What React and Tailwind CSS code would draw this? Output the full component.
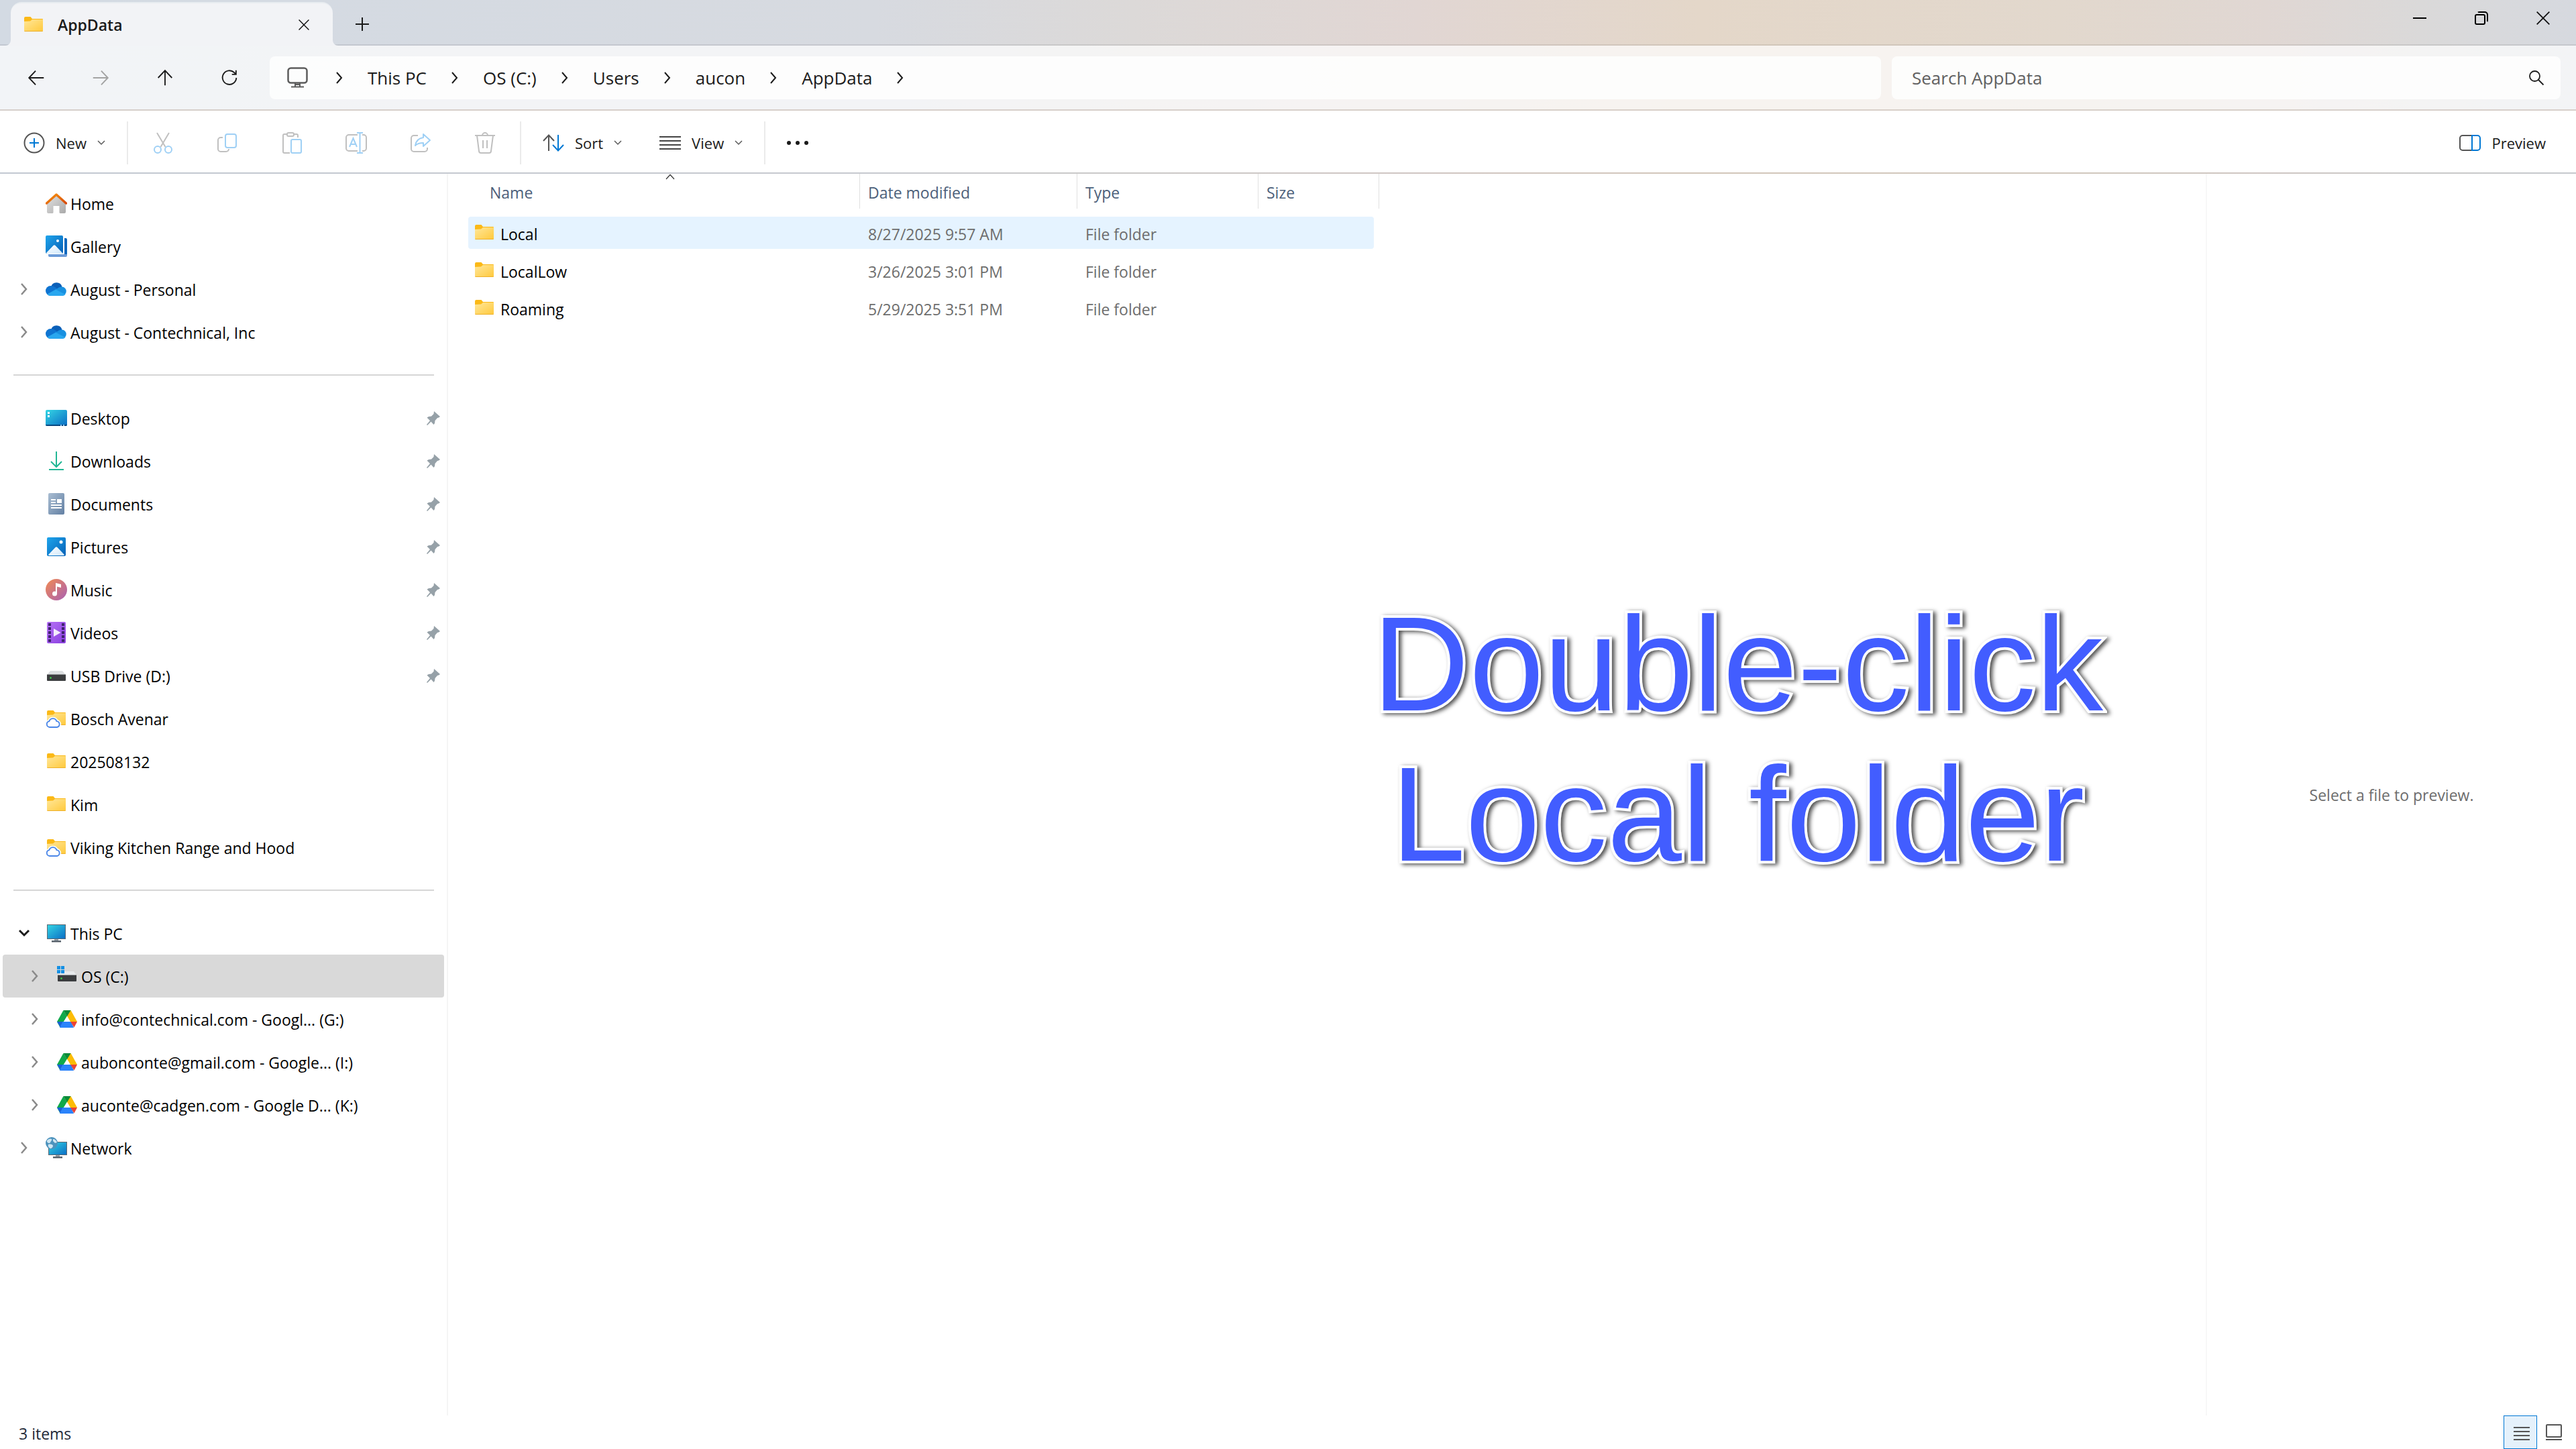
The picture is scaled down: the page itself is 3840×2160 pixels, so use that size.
import { useState } from "react";

const GRADIENTS = [
  { id: "folder", from: "#ffe79a", to: "#ffc93c" },
  { id: "blue", from: "#1fa5ec", to: "#0560b6" },
  { id: "screen", from: "#35d6e4", to: "#0a6cc4" },
  { id: "roof", from: "#f7930f", to: "#d84a0c" },
  { id: "wall", from: "#e2e2e2", to: "#a9a9a9" },
  { id: "doc", from: "#a9bdd2", to: "#6380a3" },
  { id: "music", from: "#f28a52", to: "#a860b4" },
  { id: "video", from: "#b571f5", to: "#8a3fe0" },
  { id: "snow", from: "#ffffff", to: "#cfe8fb" },
];

function Gradients() {
  return (
    <svg className="absolute w-0 h-0" aria-hidden="true">
      <defs>
        {GRADIENTS.map((g) => (
          <linearGradient key={g.id} id={g.id} x1="0" y1="0" x2="1" y2="1">
            <stop offset="0" stopColor={g.from} />
            <stop offset="1" stopColor={g.to} />
          </linearGradient>
        ))}
      </defs>
    </svg>
  );
}

function Svg({ w = 32, h = 32, children }) {
  return (
    <svg width={w} height={h} viewBox={`0 0 ${w} ${h}`} fill="none" className="shrink-0" aria-hidden="true">
      {children}
    </svg>
  );
}

/* ---------- coloured icons ---------- */

function FolderShape() {
  return (
    <>
      <path d="M2 6a2 2 0 0 1 2-2h7.5l2.5 3h15a1 1 0 0 1 1 1v8H2z" fill="#fbb917" />
      <path d="M2 11l9-.5 3-2.5h16v17a1 1 0 0 1-1 1H3a1 1 0 0 1-1-1z" fill="url(#folder)" />
      <path d="M2.5 25.5h27" stroke="#eeb02a" />
    </>
  );
}
const Folder = () => <Svg><FolderShape /></Svg>;

const CloudFolder = () => (
  <Svg>
    <FolderShape />
    <path d="M6 29a4.500 4.500 0 0 1-.6-8.900 5.800 5.800 0 0 1 11 0A4.500 4.500 0 0 1 17 29z" fill="#fff" stroke="#fff" strokeWidth="5" />
    <path d="M6 29a4.500 4.500 0 0 1-.6-8.900 5.800 5.800 0 0 1 11 0A4.500 4.500 0 0 1 17 29z" fill="#fff" stroke="#4a86e8" strokeWidth="1.800" />
  </Svg>
);

const HomeIcon = () => (
  <Svg>
    <path d="M2 14L16 3l14 11v15a2 2 0 0 1-2 2h-6a1.500 1.500 0 0 1-1.500-1.500V20h-9v9.500A1.500 1.500 0 0 1 10 31H4a2 2 0 0 1-2-2z" fill="url(#wall)" />
    <path d="M1.500 16L16 3l14.500 13" stroke="url(#roof)" strokeWidth="3.500" strokeLinecap="round" strokeLinejoin="round" />
  </Svg>
);

const GalleryIcon = () => (
  <Svg>
    <path d="M28 4h2a2 2 0 0 1 2 2v24H6a2 2 0 0 1-2-2h24z" fill="#0a67bd" />
    <path d="M4 28h28v2a2 2 0 0 1-2 2H6a2 2 0 0 1-2-2z" fill="#6b9bd8" />
    <rect width="27" height="28" fill="#fff" />
    <rect width="26" height="27" rx="2" fill="url(#blue)" />
    <circle cx="18" cy="8" r="2" fill="#fff" />
    <path d="M1 26l10.500-11a2 2 0 0 1 3 0L25 26a2 2 0 0 1-1 1H2a2 2 0 0 1-1-1z" fill="url(#snow)" />
  </Svg>
);

const OneDrive = () => (
  <Svg>
    <path d="M8 13a8.500 8.500 0 0 1 16.500-.5L20 20z" fill="#0a5fb8" />
    <path d="M7.500 26a7.500 7.500 0 0 1 0-15c3 0 5 1 8 3l6 5-14 7z" fill="#0f74d1" />
    <path d="M14 17l6-3.500a8 8 0 0 1 4.500-1 6.800 6.800 0 0 1 .5 13.500z" fill="#1890e0" />
    <path d="M2.500 23.500L15 16.500l14.500 7.500a7 7 0 0 1-4.500 2H7.500a7.500 7.500 0 0 1-5-2.500z" fill="#29a7ef" />
  </Svg>
);

const DesktopIcon = () => (
  <Svg>
    <rect y="4" width="32" height="24" rx="2" fill="url(#screen)" />
    <path d="M0 26h32a2 2 0 0 1-2 2H2a2 2 0 0 1-2-2z" fill="#07477f" />
    <path d="M3 7h3v3H3zM3 12h3v3H3z" fill="#fff" />
    <path d="M22 26h2v2h-2zM26 26h2v2h-2z" fill="#8cc4ee" />
  </Svg>
);

const DownloadsIcon = () => (
  <Svg>
    <path d="M16 2v22M8 17l8 8 8-8M5 29h22" stroke="#22b795" strokeWidth="2" />
  </Svg>
);

const DocumentsIcon = () => (
  <Svg>
    <rect x="4" width="24" height="32" rx="2" fill="url(#doc)" />
    <path d="M8 10h7M8 14h7M8 18h16M8 22h16" stroke="#fff" strokeWidth="2" />
    <rect x="17" y="9" width="7" height="6" fill="#fff" />
  </Svg>
);

const PicturesIcon = () => (
  <Svg>
    <rect x="2" y="2" width="28" height="28" rx="2" fill="url(#blue)" />
    <circle cx="23" cy="9" r="2.500" fill="#fff" />
    <path d="M4 28l10.500-11a2 2 0 0 1 3 0L28 28a2 2 0 0 1-1 1H5a2 2 0 0 1-1-1z" fill="url(#snow)" />
  </Svg>
);

const MusicIcon = () => (
  <Svg>
    <circle cx="16" cy="16" r="16" fill="url(#music)" />
    <circle cx="13.500" cy="22" r="3.500" fill="#fff" />
    <path d="M15 22V6l8 2v5l-6-1.500V22z" fill="#fff" />
  </Svg>
);

const VideosIcon = () => (
  <Svg>
    <rect x="2" width="28" height="32" rx="2" fill="url(#video)" />
    <path d="M6 2v30M26 2v30" stroke="#40246e" strokeWidth="4" strokeDasharray="4 2" />
    <path d="M12 10l10.500 6L12 22z" fill="#f4ecfc" />
  </Svg>
);

const UsbDrive = () => (
  <Svg>
    <path d="M7 9h18l5 6H2z" fill="#dcdfe1" />
    <path d="M2 14.500h28V23a1 1 0 0 1-1 1H3a1 1 0 0 1-1-1z" fill="#3b3d3f" />
    <circle cx="7.500" cy="19.500" r="1.300" fill="#3ee04a" />
  </Svg>
);

const SystemDrive = () => (
  <Svg>
    <path d="M7 9h19l4 6H2z" fill="#e8ebed" />
    <path d="M2 14.500h28V23a1 1 0 0 1-1 1H3a1 1 0 0 1-1-1z" fill="#3b3d3f" />
    <circle cx="7.500" cy="19.500" r="1.300" fill="#3ee04a" />
    <path d="M1 1h5v5H1zM7 1h5v5H7zM1 7h5v5H1zM7 7h5v5H7z" fill="#1490e4" />
  </Svg>
);

const GoogleDrive = () => (
  <Svg>
    <path d="M10.500 3L1 20l4.500 8.500L16 11.500z" fill="#10a94b" />
    <path d="M21.500 3L31 20H21L13 6.500 16 3z" fill="#fcbc05" />
    <path d="M10.500 3h11L16 12z" fill="#0a8a38" />
    <path d="M1 20h9l-4 8.500z" fill="#1a62d6" />
    <path d="M9.500 20H22l4 9H6a2 2 0 0 1-1-.5z" fill="#2b83fb" />
    <path d="M21 20h10l-4.500 8.500z" fill="#ea4335" />
  </Svg>
);

const ThisPcIcon = () => (
  <Svg>
    <path d="M13 24h6v4h-6z" fill="#9aa1a8" />
    <path d="M9 27h14v2.500H9z" fill="#56606a" />
    <rect x="2.500" y="3.500" width="27" height="21" fill="url(#screen)" stroke="#5d6873" />
  </Svg>
);

const NetworkIcon = () => (
  <Svg>
    <path d="M15 26h6v4h-6z" fill="#9aa1a8" />
    <path d="M11 29h14v2.500H11z" fill="#56606a" />
    <rect x="4.500" y="7.500" width="27" height="19" fill="url(#screen)" stroke="#5d6873" />
    <circle cx="9" cy="9" r="9" fill="#4d93bd" />
    <path d="M2 5c3-3 6-3 7-2s-1 3-2 5-4 1-5-1zM11 3c3 0 5 2 6 5l-3 1-3-3zM4 11c3-1 7 0 7 2s-2 4-4 4c-2-1-4-3-3-6z" fill="#cfe6f2" />
  </Svg>
);

const Pin = () => (
  <Svg w={22} h={22}>
    <path d="M12 1l9 8-2 1.500-2 .5-3.500 4-.5 4-1.500 2-4-4.500L2 22l-1-1 5-6-4.500-4.500L4 9l4-.5 3.500-3.500z" fill="#96a1a8" />
  </Svg>
);

/* ---------- line icons ---------- */

const ChevronRight = () => (
  <Svg w={10} h={18}>
    <path d="M1 1l7 8-7 8" stroke="#1b1b1b" strokeWidth="2" />
  </Svg>
);
const ChevronDown = () => (
  <Svg w={12} h={8}>
    <path d="M1 1l5 5 5-5" stroke="#5a5a5a" strokeWidth="1.500" />
  </Svg>
);
const Cross = ({ size = 20 }) => (
  <svg width={size} height={size} viewBox="0 0 20 20" fill="none" aria-hidden="true">
    <path d="M.7.7l18.600 18.600M19.300.7L.7 19.300" stroke="#111" strokeWidth="1.800" />
  </svg>
);

const NAV_BUTTONS = [
  { label: "Back", color: "#1b1b1b", d: "M28 16H5M15 5L4.500 16 15 27" },
  { label: "Forward", color: "#a3a3a3", d: "M4 16h23M17 5l10.500 11L17 27" },
  { label: "Up", color: "#1b1b1b", d: "M16 28V5M5 16L16 4.500 27 16" },
  { label: "Refresh", color: "#1b1b1b", d: "M27 16a11 11 0 1 1-3.500-8.500l2.500 2.500M26.500 4v6.500H20" },
];

const GREY = "#c0c0c0";
const SKY = "#9fd0f5";

const EDIT_BUTTONS = [
  {
    label: "Cut",
    icon: (
      <>
        <path d="M7 1l12.500 21M25 1L12.500 22" stroke={GREY} strokeWidth="2" />
        <circle cx="8" cy="26" r="5" stroke={SKY} strokeWidth="2" />
        <circle cx="24" cy="26" r="5" stroke={SKY} strokeWidth="2" />
      </>
    ),
  },
  {
    label: "Copy",
    icon: (
      <>
        <path d="M9 8H6a4 4 0 0 0-4 4v13a4 4 0 0 0 4 4h8a4 4 0 0 0 4-4" stroke={GREY} strokeWidth="2" />
        <rect x="13" y="3" width="16" height="20" rx="3" stroke={SKY} strokeWidth="2" />
      </>
    ),
  },
  {
    label: "Paste",
    icon: (
      <>
        <path d="M9 3H5a2 2 0 0 0-2 2v24a2 2 0 0 0 2 2h8M19 3h4a2 2 0 0 1 2 2v3" stroke={GREY} strokeWidth="2" />
        <rect x="9" y="1" width="10" height="5" rx="2" stroke={GREY} strokeWidth="2" />
        <rect x="15" y="11" width="15" height="20" rx="2" stroke={SKY} strokeWidth="2" />
      </>
    ),
  },
  {
    label: "Rename",
    icon: (
      <>
        <path d="M18 4H5a4 4 0 0 0-4 4v16a4 4 0 0 0 4 4h13M25 4h2a4 4 0 0 1 4 4v16a4 4 0 0 1-4 4h-2" stroke={GREY} strokeWidth="2" />
        <path d="M6 22l5.500-13L17 22M8 18h7M17 1h9M17 31h9M21.500 1v30" stroke={SKY} strokeWidth="2" />
      </>
    ),
  },
  {
    label: "Share",
    icon: (
      <>
        <path d="M12 5H6a4 4 0 0 0-4 4v16a4 4 0 0 0 4 4h16a4 4 0 0 0 4-4v-2" stroke={GREY} strokeWidth="2" />
        <path d="M20 3l10 9-10 9v-5c-6 0-9 1-12 4 1-7 5-11 12-12z" stroke={SKY} strokeWidth="2" strokeLinejoin="round" />
      </>
    ),
  },
  {
    label: "Delete",
    icon: (
      <>
        <path d="M1 5h30M4 5l3 23a3 3 0 0 0 3 3h12a3 3 0 0 0 3-3l3-23M12 5a4 4 0 0 1 8 0" stroke={GREY} strokeWidth="2" />
        <path d="M13 12v12M19 12v12" stroke={GREY} strokeWidth="2" />
      </>
    ),
  },
];

/* ---------- data ---------- */

const CRUMBS = ["This PC", "OS (C:)", "Users", "aucon", "AppData"];

const NAV_ITEMS = [
  { label: "Home", Icon: HomeIcon },
  { label: "Gallery", Icon: GalleryIcon },
  { label: "August - Personal", Icon: OneDrive, arrow: true },
  { label: "August - Contechnical, Inc", Icon: OneDrive, arrow: true },
  { divider: true },
  { label: "Desktop", Icon: DesktopIcon, pinned: true },
  { label: "Downloads", Icon: DownloadsIcon, pinned: true },
  { label: "Documents", Icon: DocumentsIcon, pinned: true },
  { label: "Pictures", Icon: PicturesIcon, pinned: true },
  { label: "Music", Icon: MusicIcon, pinned: true },
  { label: "Videos", Icon: VideosIcon, pinned: true },
  { label: "USB Drive (D:)", Icon: UsbDrive, pinned: true },
  { label: "Bosch Avenar", Icon: CloudFolder },
  { label: "202508132", Icon: Folder },
  { label: "Kim", Icon: Folder },
  { label: "Viking Kitchen Range and Hood", Icon: CloudFolder },
  { divider: true },
  { label: "This PC", Icon: ThisPcIcon, arrow: true, open: true },
  { label: "OS (C:)", Icon: SystemDrive, arrow: true, child: true },
  { label: "info@contechnical.com - Googl... (G:)", Icon: GoogleDrive, arrow: true, child: true },
  { label: "aubonconte@gmail.com - Google... (I:)", Icon: GoogleDrive, arrow: true, child: true },
  { label: "auconte@cadgen.com - Google D... (K:)", Icon: GoogleDrive, arrow: true, child: true },
  { label: "Network", Icon: NetworkIcon, arrow: true },
];

const FILES = [
  { name: "Local", modified: "8/27/2025 9:57 AM", type: "File folder" },
  { name: "LocalLow", modified: "3/26/2025 3:01 PM", type: "File folder" },
  { name: "Roaming", modified: "5/29/2025 3:51 PM", type: "File folder" },
];

/* ---------- parts ---------- */

function TitleBar() {
  return (
    <div className="flex h-[68px] items-start border-b-2 border-black/8">
      <div className="relative mt-[3px] ml-4 flex h-[65px] w-[480px] items-center gap-5 rounded-t-2xl border-t-2 border-[#e8ecf0] bg-[#f2f3f6] pl-[18px]">
        <Folder />
        <span className="text-[23px] leading-8 font-semibold text-[#1b1b1b]">AppData</span>
        <button aria-label="Close tab" className="mr-[27px] ml-auto flex h-8 w-8 items-center justify-center">
          <Cross size={16} />
        </button>
        {/* curved feet where the tab meets the bar */}
        <svg className="absolute bottom-0 -left-2" width="8" height="8" aria-hidden="true">
          <path d="M8 0v8H0a8 8 0 0 0 8-8z" fill="#f2f3f6" />
        </svg>
        <svg className="absolute -right-2 bottom-0" width="8" height="8" aria-hidden="true">
          <path d="M0 0v8h8a8 8 0 0 1-8-8z" fill="#f2f3f6" />
        </svg>
      </div>
      <button aria-label="New tab" className="mt-5 ml-7 flex h-8 w-8 items-center justify-center">
        <Svg w={20} h={20}>
          <path d="M10 0v20M0 10h20" stroke="#1b1b1b" strokeWidth="2" />
        </Svg>
      </button>
      <div className="mr-[3px] ml-auto flex">
        <button aria-label="Minimize" className="flex h-[54px] w-[92px] items-center justify-center">
          <Svg w={20} h={20}>
            <path d="M0 10h20" stroke="#000" strokeWidth="2" />
          </Svg>
        </button>
        <button aria-label="Restore" className="flex h-[54px] w-[92px] items-center justify-center">
          <Svg w={20} h={20}>
            <rect x="1" y="5" width="14" height="14" rx="2" stroke="#000" strokeWidth="2" />
            <path d="M5 1.500C5.500 1 6 1 7 1h8a4 4 0 0 1 4 4v8c0 1 0 1.500-.5 2" stroke="#000" strokeWidth="2" />
          </Svg>
        </button>
        <button aria-label="Close" className="flex h-[54px] w-[92px] items-center justify-center">
          <Cross />
        </button>
      </div>
    </div>
  );
}

function AddressRow() {
  const [query, setQuery] = useState("");
  return (
    <div className="bg-white/70">
      <div className="flex h-[97px] items-center border-b-2 border-[#cabfb8]/70 pr-[23px] pl-[30px]">
        <div className="flex gap-12">
          {NAV_BUTTONS.map((b) => (
            <button key={b.label} aria-label={b.label} className="flex h-12 w-12 items-center justify-center">
              <svg width="30" height="30" viewBox="0 0 32 32" fill="none" aria-hidden="true">
                <path d={b.d} stroke={b.color} strokeWidth="2" />
              </svg>
            </button>
          ))}
        </div>
        <nav className="ml-9 flex h-16 flex-1 items-center gap-[37px] rounded-lg bg-white/80 pl-[26px] text-[26px] text-[#1b1b1b]">
          <span className="w-9">
            <Svg>
              <rect x="1.500" y="1.500" width="28" height="22" rx="4" stroke="#5c5c5c" strokeWidth="2.500" />
              <path d="M12 24v5M19 24v5M6 29.500h19M12 26h7" stroke="#5c5c5c" strokeWidth="2" />
            </Svg>
          </span>
          <ChevronRight />
          {CRUMBS.map((c) => (
            <span key={c} className="flex items-center gap-[37px]">
              <a href="#" className="leading-9">{c}</a>
              <ChevronRight />
            </span>
          ))}
        </nav>
        <label className="ml-4 flex h-16 w-[997px] items-center rounded-lg bg-white/80 pr-6 pl-[30px]">
          <input
            type="text"
            aria-label="Search AppData"
            placeholder="Search AppData"
            value={query}
            onChange={(e) => setQuery(e.target.value)}
            className="flex-1 bg-transparent text-[26px] leading-9 text-[#1b1b1b] outline-none placeholder:text-[#616161]"
          />
          <Svg w={24} h={24}>
            <circle cx="9.500" cy="9.500" r="7.500" stroke="#1b1b1b" strokeWidth="1.800" />
            <path d="M15 15l7.500 7.500" stroke="#1b1b1b" strokeWidth="1.800" />
          </Svg>
        </label>
      </div>
    </div>
  );
}

function Separator() {
  return <div className="h-16 w-0.5 bg-[#ebebeb]" />;
}

function Toolbar() {
  return (
    <div className="flex h-[92px] items-center bg-white pt-1 pr-[45px] pl-[35px] text-[22px] leading-8 text-[#1b1b1b]">
      <button className="flex items-center gap-4">
        <Svg>
          <circle cx="16" cy="16" r="14.500" stroke="#555" strokeWidth="2" />
          <path d="M16 9v14M9 16h14" stroke="#0078d4" strokeWidth="2" />
        </Svg>
        New
        <ChevronDown />
      </button>
      <div className="w-8" />
      <Separator />
      <div className="mx-7 flex gap-12">
        {EDIT_BUTTONS.map((b) => (
          <button key={b.label} aria-label={b.label} disabled className="flex h-12 w-12 items-center justify-center">
            <Svg>{b.icon}</Svg>
          </button>
        ))}
      </div>
      <Separator />
      <button className="ml-8 flex items-center gap-4">
        <Svg>
          <path d="M9 28V5M1 13l8-8.500 8 8.500" stroke="#555" strokeWidth="2" />
          <path d="M23 4v23M15 19l8 8.500 8-8.500" stroke="#0078d4" strokeWidth="2" />
        </Svg>
        Sort
        <ChevronDown />
      </button>
      <button className="mr-8 ml-14 flex items-center gap-4">
        <Svg>
          <path d="M0 7h32M0 13h32M0 19h32M0 25h32" stroke="#444" strokeWidth="2" />
        </Svg>
        View
        <ChevronDown />
      </button>
      <Separator />
      <button aria-label="See more" className="ml-8">
        <Svg>
          <circle cx="3" cy="16" r="3" fill="#1b1b1b" />
          <circle cx="16" cy="16" r="3" fill="#1b1b1b" />
          <circle cx="29" cy="16" r="3" fill="#1b1b1b" />
        </Svg>
      </button>
      <button className="ml-auto flex items-center gap-4">
        <Svg>
          <path d="M19 5H5a4 4 0 0 0-4 4v14a4 4 0 0 0 4 4h14" stroke="#555" strokeWidth="2" />
          <path d="M19 5h8a4 4 0 0 1 4 4v14a4 4 0 0 1-4 4h-8z" stroke="#0078d4" strokeWidth="2" />
        </Svg>
        Preview
      </button>
    </div>
  );
}

function NavItem({ item, selected, onSelect }) {
  const { label, Icon, arrow, open, child, pinned } = item;
  return (
    <button
      onClick={onSelect}
      className={`flex h-16 w-full items-center rounded-sm pr-[5px] text-left ${child ? "pl-8" : "pl-4"} ${selected ? "bg-[#d9d9d9]" : ""}`}
    >
      <span className="mr-4 flex w-8 justify-center">
        {arrow && !open && (
          <Svg w={12} h={18}>
            <path d="M2 1l7 8-7 8" stroke="#8a8a8a" strokeWidth="2.500" />
          </Svg>
        )}
        {open && (
          <Svg w={18} h={12}>
            <path d="M2 2l7 7 7-7" stroke="#1b1b1b" strokeWidth="3" />
          </Svg>
        )}
      </span>
      <Icon />
      <span className="ml-[5px] pt-0.5 text-[23px] leading-8 text-black">{label}</span>
      {pinned && <span className="ml-auto"><Pin /></span>}
    </button>
  );
}

function Sidebar() {
  const [selected, setSelected] = useState("OS (C:)");
  return (
    <aside className="w-[668px] shrink-0 border-r-2 border-[#f5f5f5] px-1 pt-3">
      {NAV_ITEMS.map((item, i) =>
        item.divider ? (
          <div key={i} className="flex h-16 items-center pr-[15px] pl-4">
            <hr className="w-full border-t-2 border-[#d6d6d6]" />
          </div>
        ) : (
          <NavItem key={i} item={item} selected={selected === item.label} onSelect={() => setSelected(item.label)} />
        )
      )}
    </aside>
  );
}

function HeadCell({ children, first }) {
  return (
    <th className="p-0 pb-3 font-normal">
      <div className={`flex h-[52px] items-center border-r border-[#e0e0e0] pt-1 ${first ? "pl-8" : "pl-3"}`}>{children}</div>
    </th>
  );
}

function FileList() {
  const [hovered, setHovered] = useState(0);
  return (
    <div className="relative ml-[30px] w-[1358px]">
      <table className="w-full table-fixed border-collapse text-left text-[23px] leading-8">
        <colgroup>
          <col className="w-[584px]" />
          <col className="w-[324px]" />
          <col className="w-[270px]" />
          <col className="w-[180px]" />
        </colgroup>
        <thead className="text-[#4c607a]">
          <tr>
            <HeadCell first>Name</HeadCell>
            <HeadCell>Date modified</HeadCell>
            <HeadCell>Type</HeadCell>
            <HeadCell>Size</HeadCell>
          </tr>
        </thead>
        <tbody className="text-[#6d6d6d]">
          {FILES.map((f, i) => {
            const bg = hovered === i ? "bg-[#e5f3ff]" : "";
            return (
              <tr key={f.name} onMouseEnter={() => setHovered(i)}>
                <td className="p-0 pb-2">
                  <div className={`flex h-12 items-center gap-2 rounded-l-sm pl-2 text-black ${bg}`}>
                    <Folder />
                    <span className="pt-1">{f.name}</span>
                  </div>
                </td>
                <td className="p-0 pb-2"><div className={`flex h-12 items-center pt-1 pl-3 ${bg}`}>{f.modified}</div></td>
                <td className="p-0 pb-2"><div className={`flex h-12 items-center pt-1 pl-3 ${bg}`}>{f.type}</div></td>
                <td className="p-0 pr-2 pb-2"><div className={`h-12 rounded-r-sm ${bg}`} /></td>
              </tr>
            );
          })}
        </tbody>
      </table>
      {/* sort direction mark above the Name column */}
      <svg className="absolute top-0 left-[294px]" width="14" height="9" viewBox="0 0 14 9" fill="none" aria-hidden="true">
        <path d="M1 8l6-6.500L13 8" stroke="#333" strokeWidth="1.200" />
      </svg>
    </div>
  );
}

function StatusBar() {
  return (
    <footer className="flex h-[50px] items-center pr-[21px] pl-7 text-[23px] leading-8 text-[#1f2937]">
      <span className="pt-1">3 items</span>
      <button aria-label="Details view" className="ml-auto flex h-[50px] w-[50px] items-center justify-center border border-[#0078d4] bg-[#e5f1fb] pt-1 pl-1">
        <Svg w={24} h={24}>
          <path d="M0 3h24M0 9h24M0 15h24M0 21h24" stroke="#555" strokeWidth="2" />
        </Svg>
      </button>
      <button aria-label="Large icons view" className="ml-[13px]">
        <Svg w={24} h={24}>
          <rect x="1" y="1" width="22" height="18" rx="1" stroke="#555" strokeWidth="2" />
          <path d="M0 23h24" stroke="#555" strokeWidth="2" />
        </Svg>
      </button>
    </footer>
  );
}

export default function App() {
  return (
    <div className="flex min-h-screen flex-col bg-white font-['Open_Sans','Noto_Sans',sans-serif]">
      <Gradients />
      <header className="bg-[linear-gradient(90deg,#d3dae3_0%,#d7dae0_34%,#dcd9d8_44%,#e1d6d3_55%,#e4d7c9_66%,#e2d8cd_80%,#e0d7d3_88%,#dad9d9_94%,#d6d9df_100%)]">
        <TitleBar />
        <AddressRow />
        <Toolbar />
        <div className="h-0.5 bg-black/8" />
      </header>

      <div className="flex flex-1">
        <Sidebar />
        <main className="relative flex-1">
          <FileList />
          <p className="pointer-events-none absolute top-[619px] right-[153px] text-center font-['Liberation_Sans',Arial,sans-serif] text-[200px] leading-[224px] whitespace-nowrap text-[#425dff] drop-shadow-[4px_2px_3px_rgba(0,0,0,0.7)] [-webkit-text-stroke:8px_white] [paint-order:stroke_fill]">
            Double-click
            <br />
            Local folder
          </p>
        </main>
        <aside className="flex w-[552px] shrink-0 items-center justify-center border-l-2 border-[#f7f7f7] text-[23px] leading-8 text-[#6d6d6d]">
          Select a file to preview.
        </aside>
      </div>

      <StatusBar />
    </div>
  );
}
